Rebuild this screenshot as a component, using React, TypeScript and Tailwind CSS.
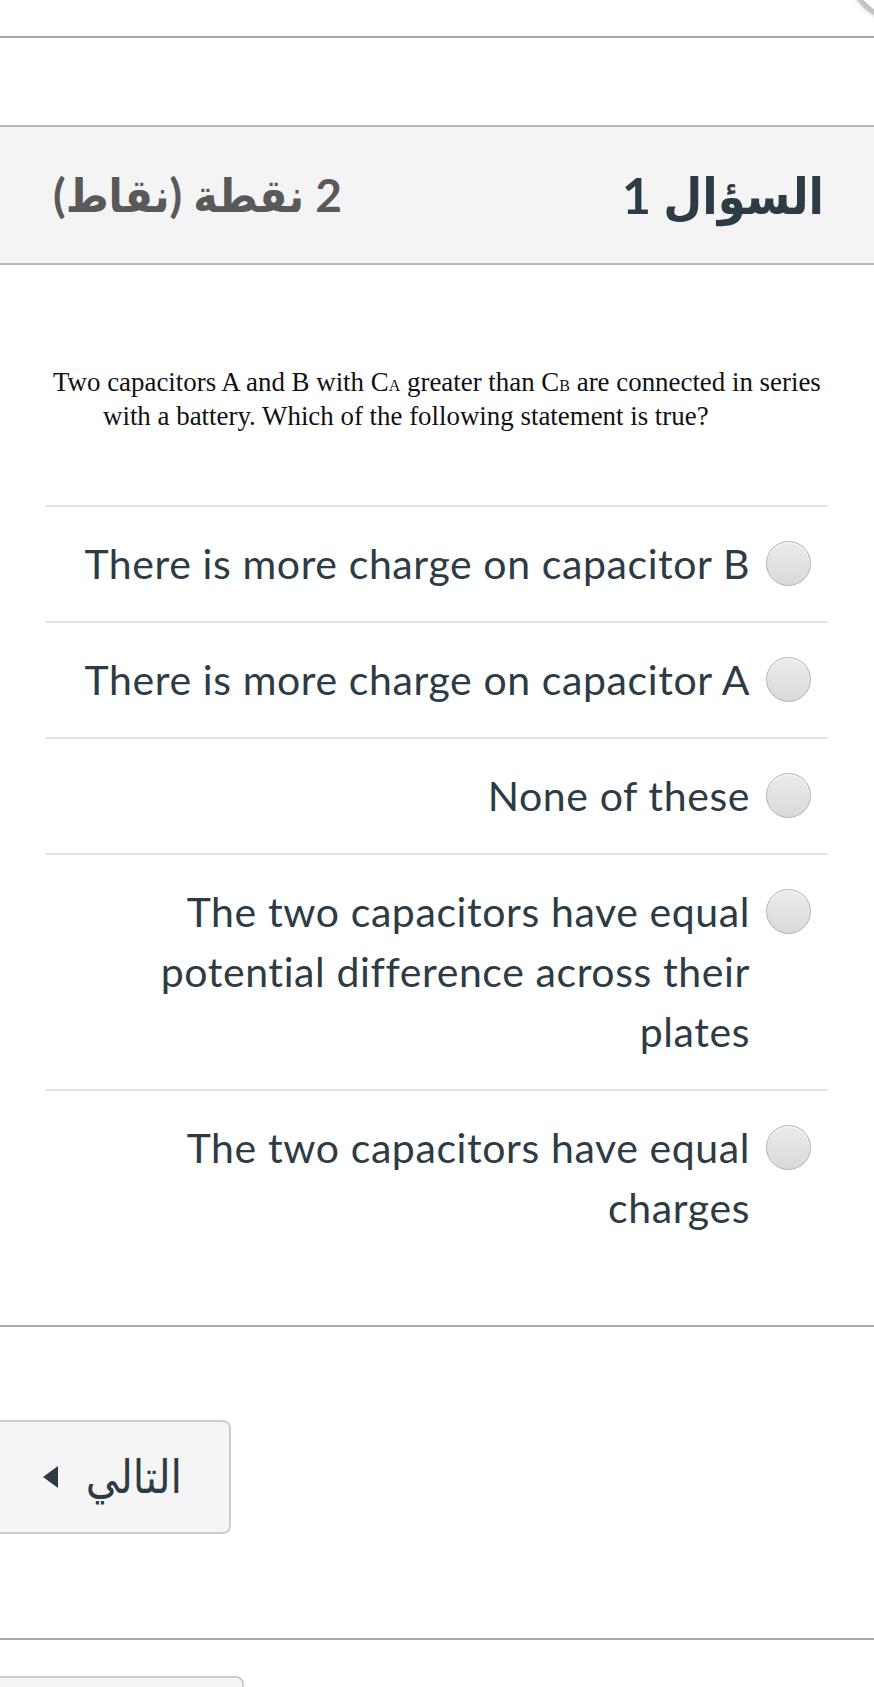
import React from "react";

const options: string[] = [
  "There is more charge on capacitor B",
  "There is more charge on capacitor A",
  "None of these",
  "The two capacitors have equal potential difference across their plates",
  "The two capacitors have equal charges",
];

function Radio() {
  return (
    <div className="mt-[7px] h-[45px] w-[45px] shrink-0 rounded-full border-[1.5px] border-[#b3b3b3] bg-gradient-to-b from-[#ececec] to-[#d9d9d9] shadow-[inset_0_1px_1px_rgba(255,255,255,0.8)]" />
  );
}

export default function App() {
  return (
    <div
      dir="rtl"
      className="relative h-[1687px] w-full overflow-hidden bg-white"
      style={{ fontFamily: "Lato, 'DejaVu Sans Condensed', 'DejaVu Sans', sans-serif" }}
    >
      {/* top-right corner fragment */}
      <div className="absolute left-[848px] top-[-82px] h-[104px] w-[104px] rounded-full border-[5px] border-[#c4c4c4] bg-white shadow-[0_0_4px_rgba(0,0,0,0.25)]" />

      {/* top bar */}
      <div className="h-[38px] border-b-2 border-[#a9a9a9]" />

      {/* header */}
      <div className="mt-[87px] flex h-[140px] items-center justify-between border-y-2 border-[#b8b8b8] bg-[#f4f4f4] pl-[53px] pr-[50px]">
        <div className="text-[50px] font-bold leading-none text-[#2d3b45]">
          السؤال 1
        </div>
        <div className="text-[46px] font-bold leading-none text-[#595959]">
          2 نقطة (نقاط)
        </div>
      </div>

      {/* question text */}
      <div
        dir="ltr"
        className="mt-[102px] pl-[53px] text-[26.9px] leading-[31px] text-[#111]"
        style={{ fontFamily: "'Liberation Serif', serif" }}
      >
        <div className="whitespace-nowrap">
          Two capacitors A and B with C<span className="text-[16px]">A</span> greater than C
          <span className="text-[16px]">B</span> are connected in series
        </div>
        <div className="whitespace-nowrap pl-[50px]">
          with a battery. Which of the following statement is true?
        </div>
      </div>

      {/* answers */}
      <div className="ml-[46px] mr-[46px] mt-[73px]">
        {options.map((o, i) => (
          <div
            key={i}
            className="flex items-start gap-[16px] border-t-2 border-[#e2e2e2] py-[27px] pl-[24px] pr-[17px]"
          >
            <Radio />
            <div className="flex-1 text-right text-[41px] leading-[60px] tracking-[0.6px] text-[#2d3b45]">
              {o}
            </div>
          </div>
        ))}
      </div>

      {/* bottom bar */}
      <div className="mt-[60px] border-b-2 border-[#a9a9a9]" />

      <div className="mt-[93px] flex justify-end">
        <div className="-ml-[10px] flex h-[114px] w-[241px] items-center gap-[28px] rounded-[8px] border-2 border-[#cdcdcd] bg-[#f5f5f5] pl-[50px] pr-[47px]">
          <span className="text-[46px] leading-none text-[#2d3b45]" style={{ fontFamily: "'DejaVu Sans Condensed', 'DejaVu Sans', sans-serif" }}>
            التالي
          </span>
          <svg width="15" height="22" viewBox="0 0 15 22" className="shrink-0">
            <polygon points="15,0 15,22 0,11" fill="#2d3b45" />
          </svg>
        </div>
      </div>

      <div className="mt-[104px] border-b-2 border-[#a9a9a9]" />

      <div className="mt-[36px] flex justify-end">
        <div className="-ml-[10px] h-[60px] w-[254px] rounded-[8px] border-2 border-[#cdcdcd] bg-[#f5f5f5]" />
      </div>
    </div>
  );
}
